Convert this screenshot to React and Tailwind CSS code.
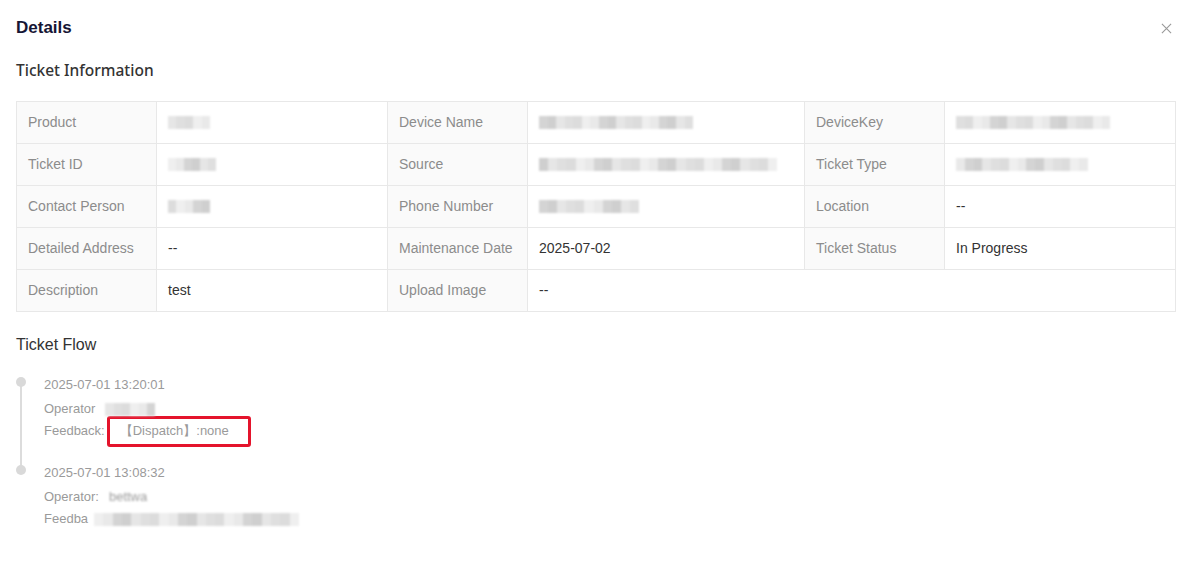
import React from "react";

const font = { fontFamily: '"Liberation Sans", Arial, sans-serif' };
const noto = { fontFamily: '"Noto Sans", "Liberation Sans", Arial, sans-serif' };

function Blur({ w, shades, h = "h-[13px]" }) {
  return (
    <div className={`flex ${h} items-center blur-[1.3px]`} style={{ width: w }}>
      {shades.map((s, i) => (
        <div key={i} className="h-full flex-1" style={{ background: s }} />
      ))}
    </div>
  );
}

const g = (n, seed) => {
  const arr = [];
  const palette = ["#dcdcdc", "#e6e6e6", "#d4d4d4", "#efefef", "#dfdfdf", "#cfcfcf", "#e9e9e9"];
  for (let i = 0; i < n; i++) arr.push(palette[(i * 3 + seed) % palette.length]);
  return arr;
};

function Label({ children }) {
  return (
    <td className="h-[42px] whitespace-nowrap border border-[#e8e8e8] bg-[#fafafa] px-[11px] text-[14px] text-[#8c8c8c] align-middle">
      {children}
    </td>
  );
}
function Value({ children, colSpan }) {
  return (
    <td colSpan={colSpan} className="h-[42px] whitespace-nowrap border border-[#e8e8e8] bg-white px-[11px] text-[14px] text-[#333] align-middle">
      {children}
    </td>
  );
}

export default function App() {
  return (
    <div className="min-h-[579px] w-[1192px] bg-white px-[16px] pt-[15px]" style={font}>
      <div className="flex h-[26px] items-center justify-between">
        <div className="text-[17px] font-bold text-[#161635]">Details</div>
        <svg width="11" height="11" viewBox="0 0 12 12" className="mr-[4px]">
          <path d="M1 1 L11 11 M11 1 L1 11" stroke="#999" strokeWidth="1.2" />
        </svg>
      </div>
      <div className="mt-[18px] flex h-[24px] items-center text-[15.5px] font-medium text-[#333]" style={noto}>Ticket Information</div>
      <table className="mt-[18px] w-[1159px] table-fixed border-collapse">
        <colgroup>
          <col className="w-[140px]" />
          <col className="w-[231px]" />
          <col className="w-[140px]" />
          <col className="w-[277px]" />
          <col className="w-[140px]" />
          <col className="w-[231px]" />
        </colgroup>
        <tbody>
          <tr>
            <Label>Product</Label>
            <Value><Blur w={42} shades={g(5, 1)} /></Value>
            <Label>Device Name</Label>
            <Value><Blur w={154} shades={g(18, 2)} /></Value>
            <Label>DeviceKey</Label>
            <Value><Blur w={154} shades={g(18, 4)} /></Value>
          </tr>
          <tr>
            <Label>Ticket ID</Label>
            <Value><Blur w={48} shades={g(6, 3)} /></Value>
            <Label>Source</Label>
            <Value><Blur w={238} shades={g(26, 5)} /></Value>
            <Label>Ticket Type</Label>
            <Value><Blur w={132} shades={g(15, 6)} /></Value>
          </tr>
          <tr>
            <Label>Contact Person</Label>
            <Value><Blur w={42} shades={g(5, 0)} /></Value>
            <Label>Phone Number</Label>
            <Value><Blur w={100} shades={g(11, 2)} /></Value>
            <Label>Location</Label>
            <Value>--</Value>
          </tr>
          <tr>
            <Label>Detailed Address</Label>
            <Value>--</Value>
            <Label>Maintenance Date</Label>
            <Value>2025-07-02</Value>
            <Label>Ticket Status</Label>
            <Value>In Progress</Value>
          </tr>
          <tr>
            <Label>Description</Label>
            <Value>test</Value>
            <Label>Upload Image</Label>
            <Value colSpan={3}>--</Value>
          </tr>
        </tbody>
      </table>
      <div className="mt-[21px] flex h-[24px] items-center text-[16px] text-[#333]">Ticket Flow</div>
      <div className="mt-[19px] flex flex-col">
        <div className="relative flex pb-[22px]">
          <div className="absolute left-[4px] top-[8px] h-[88px] w-[2px] bg-[#dcdcdc]" />
          <div className="relative z-10 mt-[1px] h-[10px] w-[10px] rounded-full bg-[#d9d9d9]" />
          <div className="ml-[18px] flex flex-col text-[13px] text-[#9a9a9a]">
            <div className="flex h-[17px] items-center">2025-07-01 13:20:01</div>
            <div className="mt-[5px] flex h-[22px] items-center">Operator<div className="ml-[10px]"><Blur w={50} shades={g(6, 1)} /></div></div>
            <div className="flex h-[22px] items-center">
              <span>Feedback:</span>
              <div className="ml-[2px] flex h-[31px] items-center rounded-[3px] border-[3px] border-[#e4142c] pl-[10px] pr-[19px]">【Dispatch】:none</div>
            </div>
          </div>
        </div>
        <div className="relative flex">
          <div className="relative z-10 mt-[1px] h-[10px] w-[10px] rounded-full bg-[#d9d9d9]" />
          <div className="ml-[18px] flex flex-col text-[13px] text-[#9a9a9a]">
            <div className="flex h-[17px] items-center">2025-07-01 13:08:32</div>
            <div className="mt-[5px] flex h-[22px] items-center">Operator:<span className="ml-[10px] blur-[1px]">bettwa</span></div>
            <div className="flex h-[22px] items-center">Feedba<div className="ml-[6px]"><Blur w={205} shades={g(22, 3)} /></div></div>
          </div>
        </div>
      </div>
    </div>
  );
}
